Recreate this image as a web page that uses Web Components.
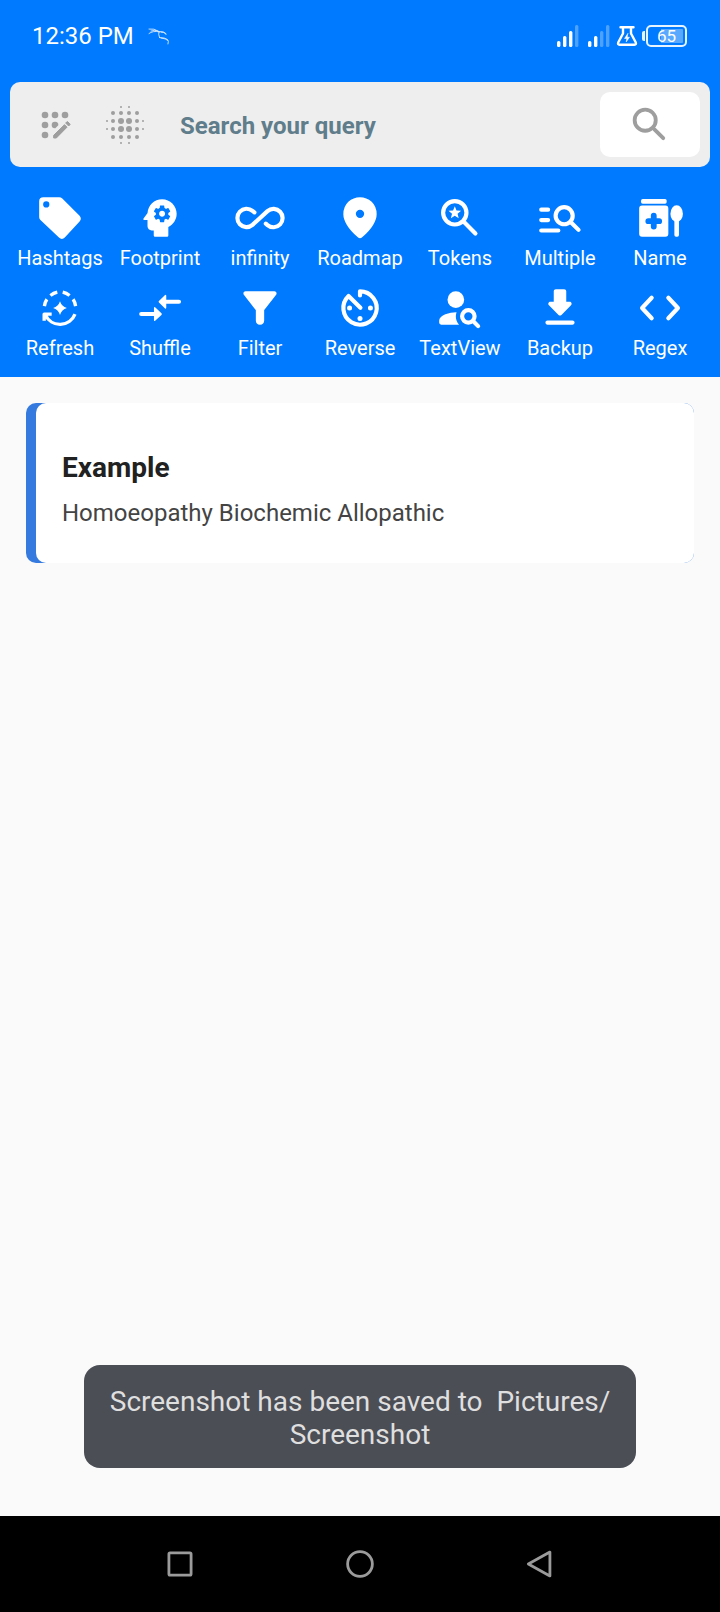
<!DOCTYPE html>
<html lang="en">
<head>
<meta charset="utf-8">
<meta name="viewport" content="width=device-width, initial-scale=1">
<title>Search</title>
<style>
  html, body { margin: 0; }
  body { font-family: Roboto, "Liberation Sans", sans-serif; background: #fafafa; }
</style>
</head>
<body>
<search-app></search-app>
<script>
const ICONS = {
  tag: '<path fill-rule="evenodd" d="M2 4q0-2 2-2h7.600q.9 0 1.500.6l8.300 8.300q1.200 1.400 0 2.800l-7.100 7.700q-1.400 1.300-2.800 0L2.600 13Q2 12.400 2 11.600zM5.400 7a1.500 1.500 0 1 0 0-3 1.500 1.500 0 0 0 0 3z"/>',
  head: '<path d="M13 8.570c-.79 0-1.430.64-1.430 1.430s.64 1.430 1.430 1.430 1.430-.64 1.430-1.430-.64-1.430-1.430-1.430z"/><path fill-rule="evenodd" d="M13 3C9.250 3 6.200 5.940 6.020 9.640L4.100 12.200c-.25.33-.01.8.4.8H6v3c0 1.100.9 2 2 2h1v2.400q0 .6.6.6h5.800q.6 0 .6-.6v-4.080c2.360-1.120 4-3.530 4-6.320 0-3.870-3.130-7-7-7zm3 7c0 .13-.01.26-.02.39l.83.66c.08.06.1.16.05.25l-.8 1.390c-.05.09-.16.12-.24.09l-.99-.4c-.21.16-.43.29-.67.39L14 13.830c-.01.1-.1.17-.2.17h-1.600c-.1 0-.18-.07-.2-.17l-.15-1.060c-.25-.1-.47-.23-.68-.39l-.99.4c-.09.03-.2 0-.25-.09l-.8-1.390c-.05-.08-.03-.19.05-.25l.84-.66c-.01-.13-.02-.26-.02-.39s.02-.27.04-.39l-.85-.66c-.08-.06-.1-.16-.05-.26l.8-1.380c.05-.09.15-.12.24-.09l1 .4c.2-.15.43-.29.67-.39L12 6.170c.02-.1.1-.17.2-.17h1.600c.1 0 .18.07.2.17l.15 1.060c.24.1.46.23.67.39l1-.4c.09-.03.2 0 .24.09l.8 1.380c.05.09.03.2-.05.26l-.85.66c.03.12.04.25.04.39z"/>',
  infinity: '<path class="s" d="M9.300 9.300 8.400 8.600A4.400 4.400 0 1 0 8.400 15.300L15.600 8.700A4.400 4.400 0 1 1 15.600 15.400L14.800 14.700"/>',
  pin: '<path fill-rule="evenodd" d="M12 21.700q-.5 0-.9-.3-3.800-3.400-5.400-6.100Q4 12.600 4 10.200q0-3.700 2.400-6Q8.800 2 12 2t5.600 2.200q2.400 2.300 2.400 6 0 2.400-1.700 5.100-1.600 2.700-5.400 6.100-.4.3-.9.3zM12 12a2 2 0 1 0 0-4 2 2 0 0 0 0 4z"/>',
  star: '<circle class="s" cx="9.500" cy="9.500" r="5.600"/><path class="s" d="m13.700 13.700 5.700 5.700"/><path d="m9.500 6.300.82 2.070 2.220.14-1.710 1.420.55 2.160-1.880-1.200-1.880 1.200.55-2.160-1.710-1.420 2.220-.14z"/>',
  multiple: '<path class="s" d="M3 8h3.300M3 13h3.300M3 18h8.200M17.200 14l3.700 3.700"/><circle class="s" cx="14" cy="10.900" r="4.100"/>',
  jar: '<rect x="2.900" y="2.900" width="12.300" height="2.200" rx=".8"/><path fill-rule="evenodd" d="M3.400 6h11.200q1.400 0 1.400 1.400v12.200q0 1.400-1.400 1.400H3.400Q2 21 2 19.600V7.400Q2 6 3.400 6zM9 9.500q-1.400 0-1.400 1.400V12.100H6.400Q5 12.100 5 13.500T6.400 14.900H7.600v1.200q0 1.400 1.400 1.400t1.400-1.400v-1.200h1.200q1.400 0 1.400-1.400t-1.400-1.400h-1.200v-1.200Q10.400 9.500 9 9.500z"/><ellipse cx="20" cy="9.900" rx="3" ry="4"/><path d="M18.900 12h2.200v8.200q0 .8-.8.8h-.6q-.8 0-.8-.8z"/>',
  refresh: '<g class="s" style="stroke-width:1.600"><path stroke-linecap="butt" d="M4.500 11.100q.3-1.900 1.200-3.300M7.400 6q1.500-1.200 3.300-1.600M19.500 11.100q-.3-1.900-1.200-3.300M16.600 6q-1.500-1.200-3.300-1.600M19.200 14.900A7.700 7.700 0 0 1 5 15.300M8 14.900H4.400v3.200"/></g><path d="M12 8.700Q12.800 11.200 15.300 12 12.800 12.800 12 15.300 11.200 12.800 8.700 12 11.200 11.200 12 8.700z"/>',
  shuffle: '<path class="s" d="M14 9h7.100M3 14.900h7.100"/><path d="M15 6.200v5.600q0 .9-.7.3l-2.800-2.700q-.4-.4 0-.8l2.800-2.700q.7-.6.7.3zM9.100 12.100v5.600q0 .9.700.3l2.900-2.700q.4-.4 0-.8L9.800 11.800q-.7-.6-.7.3z"/>',
  filter: '<path d="M4.250 5.610C6.270 8.200 10 13 10 13v5q0 2 2 2t2-2v-5s3.720-4.800 5.740-7.390c.51-.66.04-1.610-.79-1.610H5.040c-.83 0-1.300.95-.79 1.610z"/>',
  timer: '<path class="s" d="M12 6V4A8 8 0 1 1 6.500 6.200L12.200 11.900"/><circle cx="7" cy="12" r="1.200"/><circle cx="17" cy="12" r="1.200"/><circle cx="12" cy="17" r="1.200"/>',
  person: '<circle cx="10" cy="8" r="4"/><path d="M10.350 14.010C7.620 13.910 2 15.270 2 18v1q0 1 1 1h8.540c-2.470-2.760-1.190-5.990-1.190-5.990z"/><circle class="s" cx="16" cy="16" r="3"/><path class="s" d="m18.400 18.400 2.300 2.300"/>',
  backup: '<path d="M16.590 9H15V4c0-.55-.45-1-1-1h-4c-.55 0-1 .45-1 1v5H7.410c-.89 0-1.340 1.080-.71 1.710l4.590 4.590c.39.39 1.020.39 1.410 0l4.590-4.590c.63-.63.19-1.710-.7-1.710zM5 19c0 .55.45 1 1 1h12c.55 0 1-.45 1-1s-.45-1-1-1H6c-.55 0-1 .45-1 1z"/>',
  code: '<path class="s" d="M8 7.100 3.400 12 8 16.900M16 7.100 20.600 12 16 16.900"/>',
  compose: '<circle cx="6" cy="6" r="2"/><circle cx="12" cy="6" r="2"/><circle cx="18" cy="6" r="2"/><circle cx="6" cy="12" r="2"/><circle cx="6" cy="18" r="2"/><path d="M14 12.200 12.200 14A2 2 0 1 1 14 12.200z"/><path stroke="currentColor" stroke-width=".6" stroke-linejoin="round" d="M20.900 11.300l-1.200-1.200q-.3-.3-.6 0l-.7.7L20.200 12.600l.7-.7q.3-.3 0-.6zM11.200 18.200V19.800h1.600l6.400-6.500-1.500-1.500z"/>',
  blur: '<circle cx="10" cy="10" r="1.500"/><circle cx="14" cy="10" r="1.500"/><circle cx="10" cy="14" r="1.500"/><circle cx="14" cy="14" r="1.500"/><g>' +
    [[6,6],[10,6],[14,6],[18,6],[6,10],[18,10],[6,14],[18,14],[6,18],[10,18],[14,18],[18,18]].map(p => `<circle cx="${p[0]}" cy="${p[1]}" r="1"/>`).join('') +
    [[10,3],[14,3],[3,10],[3,14],[21,10],[21,14],[10,21],[14,21]].map(p => `<circle cx="${p[0]}" cy="${p[1]}" r=".5"/>`).join('') + '</g>',
  search: '<circle class="s" cx="9.500" cy="9.500" r="5.500"/><path class="s" d="m14.300 14.300 4.600 4.600"/>',
  square: '<rect class="s" x="2.500" y="2.500" width="19" height="19" rx="1"/>',
  circle: '<circle class="s" cx="12" cy="12" r="10.600"/>',
  triangle: '<path class="s" d="M2 12 20.500 1.800v20.400z"/>'
};

function define(name, markup) {
  customElements.define(name, class extends HTMLElement {
    connectedCallback() {
      if (this.shadowRoot) return;
      const root = this.attachShadow({ mode: 'open' });
      const template = document.createElement('template');
      template.innerHTML = typeof markup === 'function' ? markup(this) : markup;
      root.append(template.content.cloneNode(true));
    }
  });
}

define('ui-icon', el => `
  <style>
    :host { display: block; flex: none; width: var(--icon, 50px); height: var(--icon, 50px); }
    svg { display: block; width: 100%; height: 100%; fill: currentColor; overflow: visible; }
    .s { fill: none; stroke: currentColor; stroke-width: var(--stroke, 2); stroke-linecap: round; stroke-linejoin: round; }
  </style>
  <svg viewBox="0 0 24 24" aria-hidden="true">${ICONS[el.getAttribute('name')]}</svg>`);

define('signal-bars', el => {
  const level = Number(el.getAttribute('level'));
  const bars = [6, 11, 16, 22].map((h, i) =>
    `<rect x="${i * 6}" y="${22 - h}" width="3.400" height="${h}" rx="1.500" opacity="${i < level ? 1 : .3}"/>`).join('');
  return `<style>:host { display: block; } svg { display: block; fill: #fff; }</style>
    <svg width="22" height="22" viewBox="0 0 22 22" aria-hidden="true">${bars}</svg>`;
});

define('battery-level', `
  <style>
    :host { display: flex; align-items: center; gap: 1px; }
    i { width: 3px; height: 10px; border-radius: 2px 0 0 2px; background: #e6f4ff; }
    span { box-sizing: border-box; width: 41px; height: 22px; border: 2px solid #e6f4ff; border-radius: 5px;
      padding: 2px; font-size: 17px; line-height: 14px; text-align: center;
      background: linear-gradient(to left, #59a9ff 22px, transparent 22px) content-box; }
  </style>
  <i></i><span><slot></slot></span>`);

define('status-bar', `
  <style>
    :host { display: flex; align-items: center; justify-content: space-between; height: 72px; padding: 0 33px 0 32px; color: #fff; }
    div { display: flex; align-items: center; }
    time { font-size: 24px; line-height: 28px; }
    .left { gap: 14px; }
    .right { gap: 6px; }
    .signals { gap: 9px; }
    .power { gap: 4px; }
    svg { display: block; fill: none; stroke: #fff; stroke-linecap: round; stroke-linejoin: round; }
  </style>
  <div class="left">
    <time>12:36 PM</time>
    <svg width="22" height="18" viewBox="0 0 22 18" stroke-width=".9" opacity=".85" aria-hidden="true">
      <path d="M1 2Q6 1 11 4.500M1 6.500Q5 3.500 11 4.800M3 4Q7 2.500 10 4M11 4.500Q10 7 11.500 10.500M11 4.800Q16 3.500 18 7.500M11.500 10.500Q17 10.500 19.500 12.500 21 14 20 17M13 5.200Q16.500 4.800 18 6.500M13 11Q18 11.500 20 13.500"/>
    </svg>
  </div>
  <div class="right">
    <div class="signals">
      <signal-bars level="3"></signal-bars>
      <signal-bars level="2"></signal-bars>
    </div>
    <div class="power">
      <svg width="22" height="22" viewBox="0 0 22 22" stroke-width="2.400" aria-hidden="true">
        <path d="M4.500 2.200h13M7 2.500V8.500L2.200 17.500Q1.500 19.700 3.600 19.800H18.400Q20.500 19.700 19.800 17.500L15 8.500V2.500"/>
        <path d="M11.800 8.500 8.500 13.500H10.800L10.200 17 13.500 12.200H11.300z" fill="#fff" stroke-width=".5"/>
      </svg>
      <battery-level>65</battery-level>
    </div>
  </div>`);

define('search-bar', `
  <style>
    :host { display: block; margin: 10px 10px 0; }
    form { display: flex; align-items: center; padding: 10px; border-radius: 10px; background: #eee; color: #9e9e9e; }
    button { display: grid; place-items: center; padding: 0; border: 0; background: none; color: inherit; }
    .compose { width: 70px; --icon: 40px; }
    .blur { width: 70px; --icon: 48px; }
    .go { width: 100px; height: 65px; border-radius: 10px; background: #fff; --icon: 46px; }
    input { flex: 1; min-width: 0; margin: 0 10px 0 20px; padding: 2px 0 0; border: 0; outline: 0; background: none;
      font: bold 24px/32px Roboto, "Liberation Sans", sans-serif; color: #607d8b; }
    input::placeholder { color: #607d8b; opacity: 1; }
  </style>
  <form role="search">
    <button class="compose" type="button" aria-label="Compose"><ui-icon name="compose"></ui-icon></button>
    <button class="blur" type="button" aria-label="Pattern"><ui-icon name="blur"></ui-icon></button>
    <input type="text" aria-label="Search your query" placeholder="Search your query">
    <button class="go" type="button" aria-label="Search"><ui-icon name="search"></ui-icon></button>
  </form>`);

define('tool-button', el => `
  <style>
    :host { display: block; min-width: 0; }
    button { display: flex; flex-direction: column; align-items: center; width: 100%; padding: 0; border: 0; background: none;
      font: 20px/30px Roboto, "Liberation Sans", sans-serif; color: #fff; white-space: nowrap; }
  </style>
  <button type="button"><ui-icon name="${el.getAttribute('icon')}"></ui-icon><slot></slot></button>`);

define('tool-grid', `
  <style>
    :host { display: grid; grid-template-columns: repeat(7, minmax(0, 1fr)); row-gap: 10px; padding: 26px 10px 14px; }
  </style>
  <slot></slot>`);

define('result-card', `
  <style>
    :host { display: block; margin: 26px; padding-left: 10px; border-radius: 10px; background: #357adf; }
    article { padding: 47px 26px 34px; border-radius: 10px; background: #fff; }
    h2 { margin: 0; font-size: 28px; line-height: 36px; font-weight: bold; color: #212121; }
    p { margin: 11px 0 0; font-size: 24px; line-height: 32px; color: #444; }
  </style>
  <article><h2><slot name="title"></slot></h2><p><slot></slot></p></article>`);

define('toast-message', `
  <style>
    :host { display: block; margin: auto 84px 48px; padding: 20px 24px 17px; border-radius: 16px; background: #4c4e56;
      font-size: 28px; line-height: 33px; color: #dfdfdf; text-align: center; }
    div { white-space: pre-wrap; }
  </style>
  <div><slot></slot></div>`);

define('system-nav', `
  <style>
    :host { display: grid; grid-template-columns: repeat(3, 1fr); align-items: center; height: 96px; padding: 0 12.5%;
      background: #000; color: #9b9b9b; --icon: 28px; --stroke: 2.400; }
    button { display: grid; place-items: center; padding: 0; border: 0; background: none; color: inherit; }
  </style>
  <button type="button" aria-label="Recent apps"><ui-icon name="square"></ui-icon></button>
  <button type="button" aria-label="Home"><ui-icon name="circle"></ui-icon></button>
  <button type="button" aria-label="Back"><ui-icon name="triangle"></ui-icon></button>`);

const TOOLS = [
  ['tag', 'Hashtags'], ['head', 'Footprint'], ['infinity', 'infinity'], ['pin', 'Roadmap'], ['star', 'Tokens'],
  ['multiple', 'Multiple'], ['jar', 'Name'], ['refresh', 'Refresh'], ['shuffle', 'Shuffle'], ['filter', 'Filter'],
  ['timer', 'Reverse'], ['person', 'TextView'], ['backup', 'Backup'], ['code', 'Regex']
];

define('search-app', `
  <style>
    :host { display: flex; flex-direction: column; min-height: 100vh; }
    header { background: #007aff; }
    main { display: flex; flex: 1; flex-direction: column; }
  </style>
  <header>
    <status-bar></status-bar>
    <search-bar></search-bar>
    <tool-grid>${TOOLS.map(t => `<tool-button icon="${t[0]}">${t[1]}</tool-button>`).join('')}</tool-grid>
  </header>
  <main>
    <result-card><span slot="title">Example</span>Homoeopathy Biochemic Allopathic</result-card>
    <toast-message role="status">Screenshot has been saved to  Pictures/<wbr>Screenshot</toast-message>
  </main>
  <system-nav></system-nav>`);
</script>
</body>
</html>
